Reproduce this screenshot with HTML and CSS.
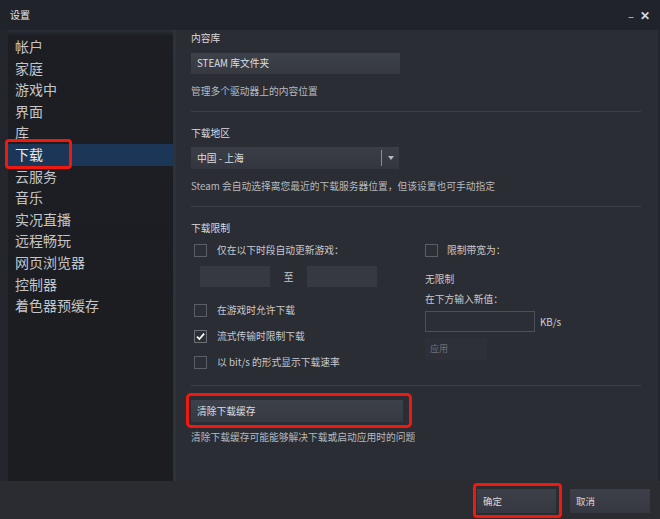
FILE: index.html
```html
<!DOCTYPE html>
<html lang="zh-CN">
<head>
<meta charset="utf-8">
<title>设置</title>
<link rel="stylesheet" href="styles.css">
</head>
<body>
<div class="window">
  <div class="titlebar">
    <span class="title">设置</span>
    <span class="controls"><span class="min">–</span><span class="close">✕</span></span>
  </div>
  <div class="main">
    <nav class="sidebar">
      <div class="item">帐户</div>
      <div class="item">家庭</div>
      <div class="item">游戏中</div>
      <div class="item">界面</div>
      <div class="item">库</div>
      <div class="item active">下载</div>
      <div class="item">云服务</div>
      <div class="item">音乐</div>
      <div class="item">实况直播</div>
      <div class="item">远程畅玩</div>
      <div class="item">网页浏览器</div>
      <div class="item">控制器</div>
      <div class="item">着色器预缓存</div>
    </nav>
    <section class="content">
      <div class="section">
        <div class="label">内容库</div>
        <div class="btn wide">STEAM 库文件夹</div>
        <div class="desc">管理多个驱动器上的内容位置</div>
      </div>
      <div class="sep"></div>
      <div class="section">
        <div class="label">下载地区</div>
        <div class="select"><span class="select-text">中国 - 上海</span><span class="select-div"></span><span class="arrow"></span></div>
        <div class="desc">Steam 会自动选择离您最近的下载服务器位置，但该设置也可手动指定</div>
      </div>
      <div class="sep"></div>
      <div class="section limits">
        <div class="label">下载限制</div>
        <div class="cols">
          <div class="col-left">
            <div class="check"><span class="box"></span><span>仅在以下时段自动更新游戏：</span></div>
            <div class="times"><span class="time"></span><span class="to">至</span><span class="time"></span></div>
            <div class="check c2"><span class="box"></span><span>在游戏时允许下载</span></div>
            <div class="check c3"><span class="box checked"><svg viewBox="0 0 14 14" width="14" height="14"><path d="M2.5 7.2 L5.6 10.2 L11.6 3.4" fill="none" stroke="#fff" stroke-width="2.2"/></svg></span><span>流式传输时限制下载</span></div>
            <div class="check c3"><span class="box"></span><span>以 bit/s 的形式显示下载速率</span></div>
          </div>
          <div class="col-right">
            <div class="check"><span class="box"></span><span>限制带宽为：</span></div>
            <div class="plain nolimit">无限制</div>
            <div class="plain newval">在下方输入新值：</div>
            <div class="rate"><span class="input"></span><span class="unit">KB/s</span></div>
            <div class="apply">应用</div>
          </div>
        </div>
      </div>
      <div class="sep sep-last"></div>
      <div class="section">
        <div class="btn wide clear">清除下载缓存</div>
        <div class="desc desc-last">清除下载缓存可能能够解决下载或启动应用时的问题</div>
      </div>
    </section>
  </div>
  <div class="footer">
    <div class="fbtn ok">确定</div>
    <div class="fbtn cancel">取消</div>
  </div>
  <div class="mark mark-nav"></div>
  <div class="mark mark-clear"></div>
  <div class="mark mark-ok"></div>
</div>
</body>
</html>
```

FILE: styles.css
```css
* { box-sizing: border-box; }
html, body { margin: 0; padding: 0; }
body {
  width: 660px;
  height: 519px;
  overflow: hidden;
  background: #22252c;
  font-family: "Noto Sans CJK SC", "Noto Sans", "Liberation Sans", sans-serif;
  color: #c6c8cc;
}
.window {
  position: relative;
  width: 660px;
  height: 519px;
  display: flex;
  flex-direction: column;
  background: #23262d;
}
.titlebar {
  height: 30px;
  flex: none;
  display: flex;
  align-items: center;
  justify-content: space-between;
  padding: 0 10px 2px 10px;
  background: #202329;
}
.title { font-size: 10px; color: #e6e7e9; }
.controls { display: flex; align-items: center; gap: 6px; color: #d5d7da; }
.min { font-size: 11px; margin-top: 3px; }
.close { font-size: 12px; font-weight: bold; }
.main {
  flex: 1;
  display: flex;
  padding-left: 8px;
  padding-right: 3px;
  min-height: 0;
}
.sidebar {
  width: 165px;
  flex: none;
  background: linear-gradient(#2b3039 0, #1c1e23 6px, #1b1d21 100%);
  padding-top: 6px;
}
.item {
  height: 21.6px;
  line-height: 21.6px;
  font-size: 14px;
  padding-left: 7px;
  color: #c3c5c9;
  white-space: nowrap;
}
.item.active {
  background: #1c3658;
  color: #e8ebef;
}
.content {
  flex: 1;
  background: #2a2d34;
  border-left: 3px solid #2e323a;
  padding: 0 17px 0 15px;
}
.label { font-size: 9.75px; color: #d9dbde; height: 14px; line-height: 14px; }
.section:first-child .label { margin-top: 1px; }
.btn {
  height: 21px;
  line-height: 21px;
  font-size: 9.75px;
  padding-left: 6px;
  color: #dcdee1;
  background: linear-gradient(#3d414a, #363940);
}
.wide { width: 209px; margin-top: 8px; }
.desc { font-size: 9.75px; color: #b7b9bd; margin-top: 11px; height: 13px; line-height: 13px; }
.desc-last { margin-top: 9px; }
.sep { height: 1px; background: #3c4048; margin: 13px 0 14px 0; width: 450px; }
.sep-last { margin: 16px 0 14px 0; }
.select {
  width: 208px;
  height: 22px;
  margin-top: 7px;
  display: flex;
  align-items: center;
  background: linear-gradient(#3a3e47, #33363d);
  font-size: 9.75px;
  color: #dcdee1;
}
.select-text { flex: 1; padding-left: 6px; }
.select-div { width: 1px; height: 16px; background: #8a8d92; }
.arrow {
  width: 17px;
  display: flex;
  justify-content: center;
}
.arrow::before {
  content: "";
  border-left: 3.5px solid transparent;
  border-right: 3.5px solid transparent;
  border-top: 4px solid #b5b8bc;
}
.limits .label { margin-top: 1px; }
.cols { display: flex; margin-top: 8px; }
.col-left { width: 234px; }
.check {
  display: flex;
  align-items: center;
  font-size: 9.75px;
  color: #c7c9cd;
  height: 14px;
  gap: 10px;
  padding-left: 3px;
}
.box {
  width: 13px;
  height: 13px;
  border: 1px solid #5a5e66;
  background: #2c2f36;
  display: flex;
  align-items: center;
  justify-content: center;
  flex: none;
}
.box.checked { border-color: #6a6e76; }
.box.checked svg { width: 11px; height: 11px; }
.times { display: flex; align-items: center; margin: 9px 0 0 9px; }
.time { width: 70px; height: 21px; background: #363940; }
.to { font-size: 9.75px; width: 37px; text-align: center; color: #c7c9cd; }
.c2 { margin-top: 16px; }
.c3 { margin-top: 12px; }
.col-right .check { padding-left: 0; gap: 9px; }
.plain { font-size: 9.75px; color: #c7c9cd; line-height: 13px; height: 13px; }
.nolimit { margin-top: 16px; }
.newval { margin-top: 7px; }
.rate { display: flex; align-items: center; margin-top: 5px; }
.input { width: 110px; height: 21px; border: 1px solid #4b4f57; background: #2b2e35; }
.unit { font-size: 9.75px; margin-left: 5px; color: #d0d2d5; }
.apply {
  width: 62px;
  height: 22px;
  line-height: 22px;
  margin-top: 6px;
  font-size: 9px;
  padding-left: 5px;
  color: #6c7077;
  background: #2d3037;
}
.clear { margin-top: 0; width: 212px; height: 22px; line-height: 22px; }
.footer {
  height: 38px;
  flex: none;
  display: flex;
  justify-content: flex-end;
  align-items: center;
  gap: 14px;
  padding: 1px 10px 0 0;
  background: #2a2c32;
}
.fbtn {
  width: 80px;
  height: 24px;
  line-height: 24px;
  font-size: 9.5px;
  padding-left: 6px;
  color: #d6d8db;
  background: linear-gradient(#3d4048, #353840);
}
.ok { width: 79px; }
.mark {
  position: absolute;
  border: 3.5px solid #f0190f;
  border-radius: 4px;
}
.mark-nav { left: 5px; top: 139px; width: 67px; height: 30px; }
.mark-clear { left: 186px; top: 393px; width: 226px; height: 35px; border-radius: 5px; }
.mark-ok { left: 473px; top: 483px; width: 89px; height: 35px; }
```
